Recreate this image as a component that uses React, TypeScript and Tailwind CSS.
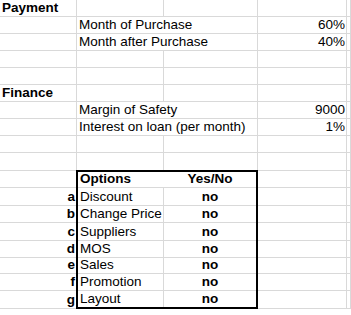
import React from 'react';

// Excel-ish sheet: gridlines are cell borders, text sits at the bottom of the cell
type Cell = { text?: string; bold?: boolean; align?: 'left' | 'right' | 'center'; span?: boolean };

const grid = 'border-r border-b border-[#d9d9d9]';

const blank = (n: number): Cell[] => Array.from({ length: n }, () => ({}));

const sheetRows: Cell[][] = [
  [{ text: 'Payment', bold: true }, ...blank(4)],
  [{}, { text: 'Month of Purchase', span: true }, { text: '60%', align: 'right' }, {}],
  [{}, { text: 'Month after Purchase', span: true }, { text: '40%', align: 'right' }, {}],
  blank(5),
  blank(5),
  [{ text: 'Finance', bold: true }, ...blank(4)],
  [{}, { text: 'Margin of Safety', span: true }, { text: '9000', align: 'right' }, {}],
  [{}, { text: 'Interest on loan (per month)', span: true }, { text: '1%', align: 'right' }, {}],
  blank(5),
  blank(5),
  // table rows: column B and C belong to the bordered block below
  [{}, {}, {}],
  ...['a', 'b', 'c', 'd', 'e', 'f', 'g'].map((l): Cell[] => [{ text: l, bold: true, align: 'right' }, {}, {}]),
];

const options = ['Discount', 'Change Price', 'Suppliers', 'MOS', 'Sales', 'Promotion', 'Layout'];

const SheetCell: React.FC<{ cell: Cell }> = ({ cell }) => (
  <div
    className={`${grid} flex items-end overflow-visible whitespace-nowrap leading-[16px] ${
      cell.span ? 'col-span-2' : ''
    } ${
      cell.align === 'right' ? 'justify-end pr-[1px]' : cell.align === 'center' ? 'justify-center' : 'pl-[2px]'
    } ${cell.bold ? 'font-bold' : ''}`}
  >
    {cell.text}
  </div>
);

const App: React.FC = () => {
  return (
    <div
      className="w-[351px] h-[315px] bg-white text-black text-[13.5px] overflow-hidden"
      style={{ fontFamily: '"Liberation Sans", Arial, sans-serif' }}
    >
      <div className="grid grid-cols-[77px_87px_94px_89px_1fr] grid-rows-[17px_17px_17px_17px_17px_17px_17px_17px_17px_18px_17px_18px_17px_18px_17px_16px_17px_18px]">
        {sheetRows.map((row, r) =>
          row.map((cell, c) => <SheetCell key={`${r}-${c}`} cell={cell} />)
        )}

        {/* Options / Yes-No block with thick outline */}
        <div className="col-start-2 col-span-2 row-start-11 row-span-8 -ml-[1px] -mt-[1px] border-2 border-black bg-white grid grid-cols-[86px_1fr] grid-rows-[16px_18px_17px_18px_17px_16px_17px_16px]">
          <div className="flex items-end pl-[2px] font-bold leading-[16px] border-b border-[#d9d9d9]">Options</div>
          <div className="flex items-end justify-center font-bold leading-[16px] border-b border-[#d9d9d9]">Yes/No</div>
          {options.map((o, i) => (
            <React.Fragment key={o}>
              <div
                className={`flex items-end pl-[2px] leading-[16px] border-r border-[#d9d9d9] ${
                  i < options.length - 1 ? 'border-b' : ''
                }`}
              >
                {o}
              </div>
              <div
                className={`flex items-end justify-center font-bold leading-[16px] border-[#d9d9d9] ${
                  i < options.length - 1 ? 'border-b' : ''
                }`}
              >
                no
              </div>
            </React.Fragment>
          ))}
        </div>
      </div>
    </div>
  );
};

export default App;
